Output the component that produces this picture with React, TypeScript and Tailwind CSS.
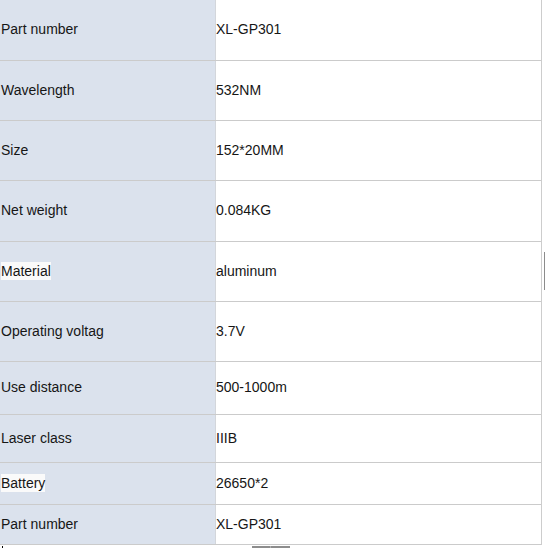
const rows: { label: string; value: string; h: string; mark?: boolean }[] = [
  { label: "Part number", value: "XL-GP301", h: "h-[61px]" },
  { label: "Wavelength", value: "532NM", h: "h-[60px]" },
  { label: "Size", value: "152*20MM", h: "h-[60px]" },
  { label: "Net weight", value: "0.084KG", h: "h-[61px]" },
  { label: "Material", value: "aluminum", h: "h-[60px]", mark: true },
  { label: "Operating voltag", value: "3.7V", h: "h-[60px]" },
  { label: "Use distance", value: "500-1000m", h: "h-[53px]" },
  { label: "Laser class", value: "IIIB", h: "h-[48px]" },
  { label: "Battery", value: "26650*2", h: "h-[42px]", mark: true },
  { label: "Part number", value: "XL-GP301", h: "h-[40px]" },
];

export default function App() {
  return (
    <div className="w-[545px] h-[548px] overflow-hidden bg-white text-[14px] text-[#161616] font-['Liberation_Sans',Arial,sans-serif]">
      <div className="flex">
        <div className="w-[542px] border-r border-[#cdcdcd]">
          {rows.map((r, i) => (
            <div key={i} className={`flex ${r.h} border-b border-[#cbcbcb]`}>
              <div className="w-[215px] shrink-0 flex items-center bg-[#dbe2ed] pl-[1px] pb-[2px]">
                <span className={r.mark ? "bg-[#fafafa] leading-[18px]" : "leading-[18px]"}>
                  {r.label}
                </span>
              </div>
              <div className="flex-1 flex items-center border-l border-[#d3d6db] pb-[2px] leading-[18px]">
                {r.value}
              </div>
            </div>
          ))}
        </div>
        <div className="ml-[2px] mt-[252px] w-[1px] h-[38px] bg-[#8c8c8c]" />
      </div>
      <div className="flex h-[3px] mt-[1px]">
        <div className="ml-[2px] w-[1px] h-full bg-black" />
        <div className="ml-[249px] w-[18px] h-full bg-[#8d8d8d]" />
        <div className="w-[1px] h-full bg-[#b0b0b0]" />
        <div className="w-[19px] h-full bg-[#8d8d8d]" />
      </div>
    </div>
  );
}
